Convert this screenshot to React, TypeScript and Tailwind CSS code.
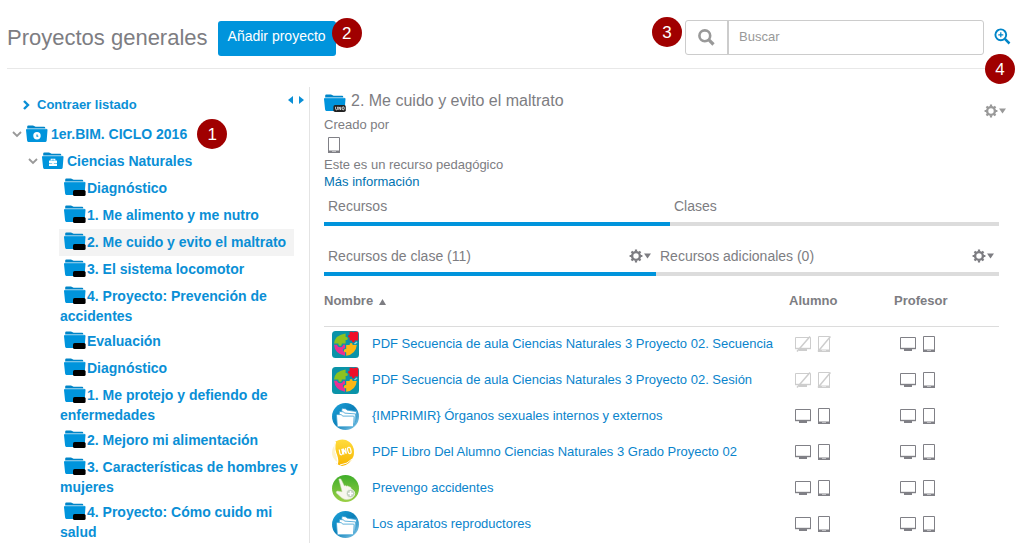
import type { ReactNode } from "react";

const font = "font-['Liberation_Sans',Arial,sans-serif]";

function Badge({ n, className }: { n: number; className: string }) {
  return (
    <span
      className={`absolute flex size-[30px] items-center justify-center rounded-full bg-[#a00000] text-[17px] leading-none text-white ${className}`}
    >
      {n}
    </span>
  );
}

type FolderKind = "clock" | "case" | "blank" | "uno";

function Folder({ kind, className = "" }: { kind: FolderKind; className?: string }) {
  return (
    <svg viewBox="0 0 22 18" width="22" height="18" className={className} aria-hidden="true">
      <path d="M1.2 3.5V1.6Q1.2.4 2.4.4H7l2.6 1.4h8.6q1 0 1 1v.7z" fill="#0085c8" />
      <path d="M0 5Q0 4 1 4h19.6q1 0 .9 1l-.8 10.6q-.1 1.3-1.2 1.3H2.3q-1.1 0-1.2-1.3z" fill="#0094dc" />
      <path d="M.8 4h19.8" stroke="#7dcbf0" strokeWidth=".6" />
      {kind === "clock" && (
        <>
          <circle cx="11" cy="10.8" r="3.7" fill="#fff" />
          <path d="M11 9.6v1.7h1.3" stroke="#0094dc" strokeWidth="1.1" fill="none" />
        </>
      )}
      {kind === "case" && (
        <>
          <path d="M9.2 8.4V7.2h3.6v1.2" stroke="#fff" strokeWidth="1.1" fill="none" />
          <rect x="7" y="8.4" width="8" height="2.5" rx=".5" fill="#fff" />
          <rect x="7" y="11.6" width="8" height="2.4" rx=".5" fill="#fff" />
          <rect x="10.2" y="10.4" width="1.6" height="1.8" fill="#fff" />
        </>
      )}
      {kind === "blank" && <rect x="9" y="12" width="12.6" height="6" rx="1.6" fill="#000" />}
      {kind === "uno" && (
        <>
          <rect x="9.4" y="11" width="12.4" height="7" rx="1.8" fill="#222" />
          <path
            d="M11.6 12.8v2q0 1 1 1t1-1v-2M14.9 16v-3.1l1.8 2.9v-3M18.2 13.8q0-1 1-1t1 1v1q0 1-1 1t-1-1z"
            stroke="#fff"
            strokeWidth=".8"
            fill="none"
          />
        </>
      )}
    </svg>
  );
}

function Chevron({ dir, className }: { dir: "down" | "right"; className: string }) {
  return (
    <svg viewBox="0 0 10 10" width="10" height="10" className={className} aria-hidden="true">
      <path
        d={dir === "down" ? "M1 3l4 4 4-4" : "M3 1l4 4-4 4"}
        fill="none"
        stroke="currentColor"
        strokeWidth={dir === "down" ? 1.8 : 2.4}
      />
    </svg>
  );
}

function Magnifier({ plus = false }: { plus?: boolean }) {
  return (
    <svg viewBox="0 0 17 17" width="17" height="17" aria-hidden="true">
      <circle cx="6.8" cy="6.8" r="5.4" fill="none" stroke="currentColor" strokeWidth={plus ? 1.9 : 2.6} />
      <path d="M10.9 10.9l4.6 4.6" stroke="currentColor" strokeWidth={plus ? 2.5 : 3.2} />
      {plus && <path d="M6.8 4.3v5M4.3 6.8h5" stroke="currentColor" strokeWidth="1.2" />}
    </svg>
  );
}

function GearMenu({ label, className }: { label: string; className: string }) {
  return (
    <button type="button" aria-label={label} className={`flex shrink-0 items-center ${className}`}>
      <svg viewBox="0 0 22 14" width="22" height="14" aria-hidden="true">
        <circle cx="7" cy="7" r="3.9" fill="none" stroke="currentColor" strokeWidth="2.4" />
        <path
          d="M7 .6v2M7 11.4v2M.6 7h2M11.4 7h2M2.5 2.5l1.4 1.4M10.1 10.1l1.4 1.4M2.5 11.5l1.4-1.4M10.1 3.9l1.4-1.4"
          stroke="currentColor"
          strokeWidth="2.2"
        />
        <path d="M15 4.4h7l-3.5 5.2z" fill="currentColor" />
      </svg>
    </button>
  );
}

function Monitor({ off = false }: { off?: boolean }) {
  return (
    <svg viewBox="0 0 18 16" width="18" height="16" className={off ? "text-[#cdcdcd]" : "text-[#808086]"} aria-hidden="true">
      <path d="M1.5 1.5h15v11h-15z" fill="none" stroke="currentColor" strokeWidth="1" />
      <path d="M1 12.5h16" stroke="currentColor" strokeWidth="1.4" />
      <path d="M5 13h8v2H5z" fill="currentColor" />
      {off && <path d="M3 15.5L16 .5" stroke="currentColor" strokeWidth="1.5" />}
    </svg>
  );
}

function Tablet({ off = false }: { off?: boolean }) {
  return (
    <svg viewBox="0 0 14 16" width="14" height="16" className={off ? "text-[#cdcdcd]" : "text-[#808086]"} aria-hidden="true">
      <path d="M1.5 14V.5h11V14" fill="none" stroke="currentColor" strokeWidth="1" />
      <path d="M1 13.5h12V16H1z" fill="currentColor" />
      <path d="M5.5 14.5h1M7.5 14.5h1" stroke="#fff" strokeWidth="1" />
      {off && <path d="M1 15.5L13.5.5" stroke="currentColor" strokeWidth="1.5" />}
    </svg>
  );
}

function Devices({ off = false }: { off?: boolean }) {
  return (
    <span className="flex items-center gap-[5px] pl-[5px]">
      <Monitor off={off} />
      <Tablet off={off} />
    </span>
  );
}

type ResourceKind = "puzzle" | "folders" | "uno" | "hand";

function ResourceIcon({ kind }: { kind: ResourceKind }) {
  return (
    <svg viewBox="0 0 27 27" width="27" height="27" className="shrink-0" aria-hidden="true">
      <defs>
        <linearGradient id="blueDisc" x1="0" y1="0" x2="1" y2="1">
          <stop offset="0" stopColor="#1fa5dc" />
          <stop offset=".5" stopColor="#0b7fb8" />
          <stop offset="1" stopColor="#9bd3ee" />
        </linearGradient>
        <linearGradient id="greenDisc" x1="0" y1="0" x2="0" y2="1">
          <stop offset="0" stopColor="#3fae2a" />
          <stop offset="1" stopColor="#9bcf45" />
        </linearGradient>
        <linearGradient id="goldDisc" x1="0" y1="0" x2="0" y2="1">
          <stop offset="0" stopColor="#ffdc3c" />
          <stop offset="1" stopColor="#f7b500" />
        </linearGradient>
      </defs>
      {kind === "puzzle" && (
        <>
          <rect width="27" height="27" rx="3.5" fill="#0a93a8" />
          <path d="M13.6 2.6V6q2.2-.4 2.2 1.5T13.600 9v3.600H9.800q.4 2.400-1.700 2.400T6.400 12.600H2Q3 4 13.600 2.600z" fill="#8cc220" />
          <path d="M17.6.8h3q.5 1.300 1.800 0h3.800v8.700h-3.400q.3 1.900-1.400 1.900T20 9.500h-2.400V6.400q-1.600.3-1.600-1.200t1.600-1.200z" fill="#f00f28" />
          <path d="M2 13.800h3.200q0 2.400 2.900 2.400t2.900-2.400h2v3.400q-2.300-.2-2.300 1.800t2.300 1.800v3.900Q3 23.400 2 13.800z" fill="#ea2f93" />
          <path d="M14.200 14h3.400q-.3-1.900 1.500-1.900t1.500 1.900h4.200q-1 9.400-10.600 10.700v-3.400q-2.400.4-2.400-1.600t2.400-1.700z" fill="#fdb713" />
          <path d="M22.500 13l2.500-2" stroke="#9ad3dc" strokeWidth="1.500" />
        </>
      )}
      {kind === "folders" && (
        <>
          <circle cx="13.5" cy="13.5" r="13.5" fill="url(#blueDisc)" />
          <path d="M9.500 9l.6-3.700 4 .6.900 1.200 9.500 1.500-1 10z" fill="#fff" stroke="#3a9fd2" strokeWidth=".8" />
          <path d="M7.200 12l.3-3.500 4 .3 1 1.300 11 .8-.9 10.400z" fill="#fff" stroke="#3a9fd2" strokeWidth=".8" />
          <path d="M4.500 12.500q0-.9.900-.9h4l1.200 1.500h10.600q1 0 .9.900l-.6 8.900q0 .9-1 .9H6.300q-.9 0-1-.9z" fill="#fff" stroke="#3a9fd2" strokeWidth=".8" />
        </>
      )}
      {kind === "uno" && (
        <>
          <circle cx="11" cy="13.5" r="11" fill="#fdf3c8" />
          <path d="M3.500 2.500Q11-1.500 17.500 3 23.500 8 21.500 17 18 26 10 27L4.500 25Q6.500 22 4.500 17Q1 9 3.500 2.500z" fill="url(#goldDisc)" />
          <path d="M3.500 3Q1.500 9 4.800 17Q6.500 22 5 26" fill="none" stroke="#fff" strokeWidth="1.200" />
          <path
            d="M7.200 10.500l.7 4q.4 1.600 1.700 1.200t1-1.800l-.8-4M11.900 15.700L11 9.700l3.300 5-.8-5.600M16.500 8.400q1.500-.5 2 1.600l.5 2q.5 2.300-.9 2.600T16.200 12.800l-.6-2q-.5-2 .9-2.400z"
            fill="none"
            stroke="#fff"
            strokeWidth="1.200"
          />
          <path d="M8 26Q16 25 20 20" stroke="#fff" strokeWidth="1" fill="none" />
        </>
      )}
      {kind === "hand" && (
        <>
          <circle cx="13.5" cy="13.5" r="13.5" fill="url(#greenDisc)" />
          <path
            d="M6.800 4.200q1.400-1.200 2.400.3l3.200 6.500q1.200-1.200 2.200.2 1.500-.9 2.300.6 1.500-.5 2.200 1.100l2 5.600q1 4-3 5.600-5 1.800-8.500-1.300L4.300 18q-.8-1.600 1.200-2l4.600.8z"
            fill="#f7f7ee"
            stroke="#c7d9a8"
            strokeWidth=".5"
          />
          <circle cx="18.500" cy="18.500" r="4.200" fill="#c3d1bf" stroke="#f2f6ec" strokeWidth=".8" />
          <path d="M18.500 16v5M16 18.500h5" stroke="#fff" strokeWidth="1.500" />
        </>
      )}
    </svg>
  );
}

const topics = [
  "Diagnóstico",
  "1. Me alimento y me nutro",
  "2. Me cuido y evito el maltrato",
  "3. El sistema locomotor",
  "4. Proyecto: Prevención de accidentes",
  "Evaluación",
  "Diagnóstico",
  "1. Me protejo y defiendo de enfermedades",
  "2. Mejoro mi alimentación",
  "3. Características de hombres y mujeres",
  "4. Proyecto: Cómo cuido mi salud",
];
const selectedTopic = 2;

const resources: { name: string; kind: ResourceKind; studentOff?: boolean }[] = [
  { name: "PDF Secuencia de aula Ciencias Naturales 3 Proyecto 02. Secuencia", kind: "puzzle", studentOff: true },
  { name: "PDF Secuencia de aula Ciencias Naturales 3 Proyecto 02. Sesión", kind: "puzzle", studentOff: true },
  { name: "{IMPRIMIR} Órganos sexuales internos y externos", kind: "folders" },
  { name: "PDF Libro Del Alumno Ciencias Naturales 3 Grado Proyecto 02", kind: "uno" },
  { name: "Prevengo accidentes", kind: "hand" },
  { name: "Los aparatos reproductores", kind: "folders" },
];

function Tab({ label, active = false, menu = false }: { label: string; active?: boolean; menu?: boolean }) {
  return (
    <div
      className={`flex items-start justify-between border-b-4 pb-[6px] pl-1 pr-[5px] ${
        active ? "border-[#0094dc]" : "border-[#dcdcdc]"
      }`}
    >
      <button type="button" role="tab" aria-selected={active} className="text-[14px] leading-5">
        {label}
      </button>
      {menu && <GearMenu label={`Opciones de ${label}`} className="h-5" />}
    </div>
  );
}

function TabRow({ className, children }: { className: string; children: ReactNode }) {
  return (
    <div role="tablist" className={`grid ${className}`}>
      {children}
    </div>
  );
}

function Header() {
  return (
    <header className="ml-[7px] mr-[19px] flex items-start border-b border-[#e8e8e8] pb-3 pt-5">
      <h1 className="text-[22px] leading-9">Proyectos generales</h1>
      <div className="relative ml-[10px] mt-px">
        <button type="button" className="h-[35px] rounded-[3px] bg-[#0094dc] px-[10px] pb-[5px] text-[14px] text-white">
          Añadir proyecto
        </button>
        <Badge n={2} className="-right-[26px] -top-[3px]" />
      </div>
      <form className="relative ml-auto mr-[15px] flex h-[35px] w-[299px] rounded-[3px] border border-[#ccc]">
        <Badge n={3} className="-left-[34px] -top-1" />
        <button
          type="button"
          aria-label="Ejecutar búsqueda"
          className="flex w-[43px] items-center justify-center border-r-2 border-[#ccc] text-[#999]"
        >
          <Magnifier />
        </button>
        <input
          type="search"
          aria-label="Buscar"
          placeholder="Buscar"
          className="min-w-0 flex-1 bg-transparent px-[10px] pb-[2px] text-[13px] outline-none placeholder:text-[#999]"
        />
        <button type="button" aria-label="Búsqueda avanzada" className="absolute -right-[28px] top-[7px] text-[#0085c8]">
          <Magnifier plus />
        </button>
        <Badge n={4} className="-right-[32px] top-[33px]" />
      </form>
    </header>
  );
}

function Sidebar() {
  return (
    <nav className="relative w-[310px] shrink-0 border-r border-[#e4e4e4] pt-[9px] text-[14px] font-bold leading-[18px] text-[#0a8fd6]">
      <button type="button" aria-label="Ajustar ancho" className="absolute right-1 top-[9px]">
        <svg viewBox="0 0 18 8" width="18" height="8" aria-hidden="true">
          <path d="M6 0v8L1 4zM12 0v8l5-4z" fill="currentColor" />
        </svg>
      </button>
      <button type="button" className="flex items-center pl-[21px] text-[13px] leading-[18px]">
        <Chevron dir="right" className="mr-[6px]" />
        Contraer listado
      </button>
      <ul>
        <li>
          <a href="#ciclo" className="relative mt-[9px] flex w-fit items-center pl-3 leading-[22px]">
            <Chevron dir="down" className="mr-1 text-[#999]" />
            <Folder kind="clock" className="mr-[3px]" />
            1er.BIM. CICLO 2016
            <Badge n={1} className="-right-10 -top-1 font-normal" />
          </a>
          <ul>
            <li>
              <a href="#ciencias" className="mt-[5px] flex w-fit items-center pl-7 leading-[22px]">
                <Chevron dir="down" className="mr-1 text-[#999]" />
                <Folder kind="case" className="mr-[3px]" />
                Ciencias Naturales
              </a>
              <ul className="pl-[59px] pt-[3px]">
                {topics.map((topic, i) => (
                  <li key={i} className="flex">
                    <a
                      href={`#tema-${i + 1}`}
                      className={`block py-[3px] pl-px pr-2 ${i === selectedTopic ? "bg-[#f3f3f3]" : ""}`}
                    >
                      <Folder kind="blank" className="mb-[3px] ml-1 mr-px inline-block align-[-6px]" />
                      {topic}
                    </a>
                  </li>
                ))}
              </ul>
            </li>
          </ul>
        </li>
      </ul>
    </nav>
  );
}

function Detail() {
  return (
    <main className="min-w-0 flex-1 pl-[14px] pr-[19px]">
      <div className="relative">
        <h2 className="flex items-center gap-[5px] pt-[3px] text-[16px] leading-[22px]">
          <Folder kind="uno" className="mt-1" />
          2. Me cuido y evito el maltrato
        </h2>
        <GearMenu label="Opciones del proyecto" className="absolute -right-[7px] top-[17px] text-[#999]" />
      </div>
      <div className="mt-1 text-[13px] leading-[17px]">
        <p>Creado por</p>
        <p className="flex h-[23px] items-center pl-[3px]">
          <Tablet />
        </p>
        <p>Este es un recurso pedagógico</p>
        <a href="#informacion" className="block w-fit text-[#0073b1]">
          Más información
        </a>
      </div>
      <TabRow className="mt-[6px] grid-cols-[346fr_329fr]">
        <Tab label="Recursos" active />
        <Tab label="Clases" />
      </TabRow>
      <TabRow className="mt-5 grid-cols-[332fr_343fr]">
        <Tab label="Recursos de clase (11)" active menu />
        <Tab label="Recursos adicionales (0)" menu />
      </TabRow>
      <table className="w-full table-fixed border-collapse text-left">
        <thead>
          <tr className="h-[50px] border-b border-[#dcdcdc] text-[13px]">
            <th>
              <button type="button" className="flex items-center gap-[6px] font-bold">
                Nombre
                <svg viewBox="0 0 7 6" width="7" height="6" className="mt-[2px]" aria-hidden="true">
                  <path d="M0 6h7L3.5 0z" fill="currentColor" />
                </svg>
              </button>
            </th>
            <th className="w-[105px]">Alumno</th>
            <th className="w-[105px]">Profesor</th>
          </tr>
        </thead>
        <tbody>
          {resources.map((r) => (
            <tr key={r.name} className="h-9">
              <td>
                <div className="flex items-center gap-[13px] pl-2">
                  <ResourceIcon kind={r.kind} />
                  <a href="#recurso" className="whitespace-nowrap text-[13px] leading-[18px] text-[#0a84cc]">
                    {r.name}
                  </a>
                </div>
              </td>
              <td>
                <Devices off={r.studentOff} />
              </td>
              <td>
                <Devices />
              </td>
            </tr>
          ))}
        </tbody>
      </table>
    </main>
  );
}

export default function App() {
  return (
    <div className={`flex min-h-screen flex-col bg-white text-[#7d7d82] ${font}`}>
      <Header />
      <div className="mt-[18px] flex flex-1">
        <Sidebar />
        <Detail />
      </div>
    </div>
  );
}
